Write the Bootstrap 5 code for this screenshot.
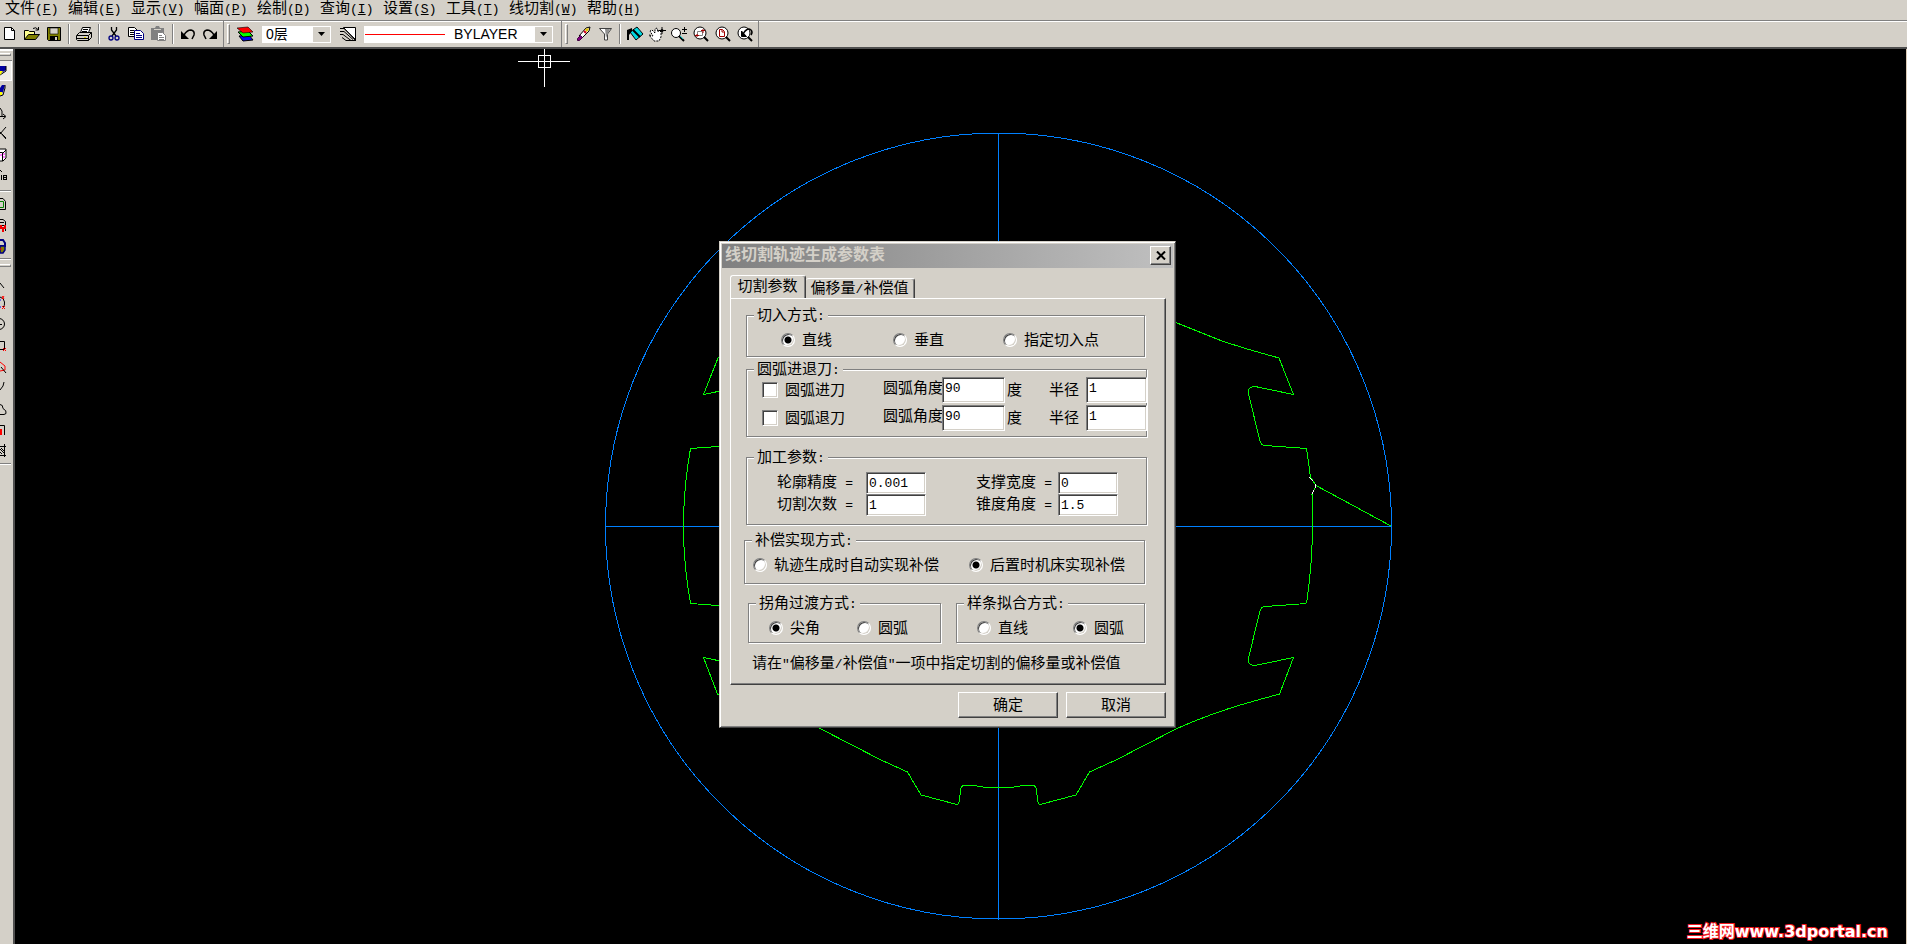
<!DOCTYPE html>
<html lang="zh-CN">
<head>
<meta charset="utf-8">
<meta name="viewport" content="width=device-width, initial-scale=1">
<title>线切割</title>
<link href="https://cdn.jsdelivr.net/npm/bootstrap@5.3.0/dist/css/bootstrap.min.css" rel="stylesheet">
<script src="https://cdn.jsdelivr.net/npm/bootstrap@5.3.0/dist/js/bootstrap.bundle.min.js"></script>
<style>
:root{--face:#d4d0c8;--shade:#808080;--deep:#404040}
body{font-family:"Liberation Sans","Noto Sans CJK SC",sans-serif;font-size:15px;line-height:18px;color:#000;background:#000;font-weight:400}
.mono{font-family:"Liberation Mono",monospace;font-size:13px;font-weight:400}
/* menu */
.menu-bar{height:20px;background:var(--face);padding-left:5px}
.menu-bar a{width:63px;height:20px;line-height:15px;color:#000;text-decoration:none;white-space:nowrap}
.menu-bar a.wide{width:78px}
/* toolbar */
.tool-bar{height:29px;background:var(--face);border-top:1px solid var(--shade);border-bottom:2px solid #505050;box-shadow:inset 0 1px #fff}
.tool-group{border-right:1px solid var(--shade);height:26px;padding-right:2px}
.tool-first{margin-left:-1px}
.tb{width:22px;height:22px;padding:0;border:0;background:none;display:flex;align-items:center;justify-content:center;flex:none}
.tb svg{display:block}
.rule{width:8px;height:20px;flex:none;display:flex;justify-content:center}
.rule::before{content:"";width:2px;background:var(--shade);border-right:1px solid #fff}
.grip{width:3px;height:20px;margin:0 4px 0 3px;border:1px solid;border-color:#fff var(--shade) var(--shade) #fff;flex:none}
.combo{height:17px;background:#fff;flex:none}
.combo select{appearance:none;border:0;background:none;padding:0;flex:1;min-width:0;height:17px;line-height:17px;font-size:14px;color:#000;outline:0}
.combo .drop{width:17px;height:15px;margin:1px;background:var(--face);pointer-events:none;display:flex;align-items:center;justify-content:center}
.combo-layer{width:69px;margin:0 6px;padding-left:4px}
.combo-line{width:189px;margin:0 6px 0 5px;padding-left:1px}
.line-sample{width:80px;height:1px;background:#f00;margin-right:9px}
/* side bar */
.side-bar{width:15px;flex:none;background:var(--face);border-right:2px solid #505050;box-shadow:inset 0 2px #fff;overflow:hidden}
.side-grip{height:3px;width:11px;margin:4px 0;border:1px solid;border-color:#fff var(--shade) var(--shade) #fff;border-left:0;flex:none}
.sb{display:block;width:12px;height:21px;padding:0;border:0;background:none;flex:none}
.sb.tall{height:22px}
.sb.active{background:#eeece8;box-shadow:inset 0 1px var(--shade),inset -1px -1px #fff}
.sb svg{display:block}
.side-rule{height:2px;width:11px;background:#fff;border-top:1px solid var(--shade);flex:none;margin-top:1px}
.side-rule.spaced{margin:4px 0 2px}
.stage{overflow:hidden;border-right:1px solid #d8c8b4}
.watermark{right:18px;bottom:2px;font:bold 16px/20px "DejaVu Sans","Noto Sans CJK SC",sans-serif;color:#fff;-webkit-text-stroke:2px #f01820;paint-order:stroke fill}
/* dialog */
.dlg{left:704px;top:192px;width:457px;background:var(--face);border:1px solid;border-color:var(--face) var(--deep) var(--deep) var(--face);box-shadow:inset 1px 1px #fff,inset -1px -1px var(--shade);padding:2px 2px 9px}
.dlg-title{height:24px;background:linear-gradient(90deg,#808080,#c0c0c0);color:var(--face);font-size:16px;font-weight:700;padding:0 2px 2px 3px}
.raised{background:var(--face);border:1px solid;border-color:#fff var(--deep) var(--deep) #fff;box-shadow:inset -1px -1px var(--shade);border-radius:0;color:#000;padding:0}
.close-x{width:21px;height:19px}
.tab-row{padding:7px 0 0 8px;height:30px}
.tab-row button{border:1px solid;border-color:#fff var(--deep) transparent #fff;border-bottom:0;border-radius:3px 3px 0 0;box-shadow:inset -1px 0 var(--shade);background:var(--face);color:#000;font-size:15px;padding:0 1px 0 0;white-space:nowrap}
.tab-row .tab-on{width:76px;height:23px;position:relative;z-index:1;padding-bottom:2px}
.tab-row .tab-off{width:109px;height:20px;border-left:0}
.tab-page{margin:0 7px 0 8px;border:1px solid;border-color:#fff var(--deep) var(--deep) #fff;box-shadow:inset -1px -1px var(--shade);padding:16px 18px 12px 15px;height:387px}
.gbox{border:1px solid var(--shade);box-shadow:1px 1px #fff,inset 1px 1px #fff;margin:0}
.gbox legend{width:auto;margin:-10px 0 -1px 7px;padding:0 3px;font-size:15px;line-height:18px;background:var(--face);height:18px}
.radio-row{height:17px;clear:left}
.pick{display:flex;align-items:center;gap:7px;white-space:nowrap}
.pick input{appearance:none;width:14px;height:14px;margin:0;background:#fff;border:1px solid;border-color:var(--shade) #fff #fff var(--shade);flex:none}
.pick input[type=radio]{border-radius:50%;box-shadow:inset 1px 1px var(--deep),inset -1px -1px var(--face)}
.pick input[type=radio]:checked{background:radial-gradient(circle,#000 3px,#fff 4px)}
.pick input[type=checkbox]{width:16px;height:16px;box-shadow:inset 1px 1px var(--deep),inset -1px -1px var(--face)}
.field{background:#fff;border:1px solid;border-color:var(--shade) #fff #fff var(--shade);box-shadow:inset 1px 1px var(--deep),inset -1px -1px var(--face);border-radius:0;padding:0 2px;color:#000;outline:0;width:100%;min-width:0}
.arc-grid{clear:left;display:grid;grid-template-columns:121px 59px 63px 44px 37px 61px;row-gap:2px;padding-left:15px;align-items:center;white-space:nowrap}
.arc-grid .field{height:26px;padding-bottom:4px}
.arc-grid .angle{padding-bottom:4px}
.arc-grid .unit{padding-left:2px}
.par-grid{clear:left;display:grid;grid-template-columns:89px 60px 50px 82px 60px;padding:7px 0 0 30px;align-items:center;white-space:nowrap}
.par-grid .field{height:22px}
.dlg .btn-push{width:100px;height:26px;font-size:15px}
</style>
</head>
<body class="d-flex flex-column vh-100 overflow-hidden">

<nav class="menu-bar d-flex flex-shrink-0" aria-label="菜单">
  <a href="#">文件<span class="mono">(<u>F</u>)</span></a>
  <a href="#">编辑<span class="mono">(<u>E</u>)</span></a>
  <a href="#">显示<span class="mono">(<u>V</u>)</span></a>
  <a href="#">幅面<span class="mono">(<u>P</u>)</span></a>
  <a href="#">绘制<span class="mono">(<u>D</u>)</span></a>
  <a href="#">查询<span class="mono">(<u>I</u>)</span></a>
  <a href="#">设置<span class="mono">(<u>S</u>)</span></a>
  <a href="#">工具<span class="mono">(<u>T</u>)</span></a>
  <a href="#" class="wide">线切割<span class="mono">(<u>W</u>)</span></a>
  <a href="#">帮助<span class="mono">(<u>H</u>)</span></a>
</nav>

<div class="tool-bar d-flex flex-shrink-0">
  <div class="tool-group tool-first d-flex align-items-center">
    <button class="tb" aria-label="新建"><svg width="16" height="16"><path d="M2.500 1.500h7l3 3v9h-10z" fill="#fff" stroke="#000"/><path d="M9.500 1.500v3h3" fill="none" stroke="#000"/></svg></button>
    <button class="tb" aria-label="打开"><svg width="16" height="16"><path d="M.5 13.500v-9h4l1 1h5v3" fill="#ffff90" stroke="#000"/><path d="M.5 13.500l4-5h11l-4 5z" fill="#808000" stroke="#000"/><path d="M9 2.500q3-2 5 1M14.500 1v3h-3" fill="none" stroke="#000"/></svg></button>
    <button class="tb" aria-label="保存"><svg width="16" height="16"><path d="M1.500 1.500h13v13h-12l-1-1z" fill="#808000" stroke="#000"/><path d="M4 2h8v6H4z" fill="#d4d0c8" stroke="#000" stroke-width=".6"/><path d="M4 10h8v5H4z"/><path d="M9 11h2v3H9z" fill="#d4d0c8"/></svg></button>
    <span class="rule"></span>
    <button class="tb" aria-label="打印"><svg width="16" height="16"><path d="M4.500 6.500l2-5h8l-2 5" fill="#fff" stroke="#000"/><path d="M7 3.500h5M6 5.500h5" stroke="#000"/><path d="M.5 9.500l3-3h12v5l-3 3h-11l-1-1z" fill="#d4d0c8" stroke="#000"/><path d="M1 9.500h11.500l3-3M12.500 9.500v5M1 12.500h11" fill="none" stroke="#000"/><path d="M8 11h2v1H8z" fill="#e0d000"/></svg></button>
    <span class="rule"></span>
    <button class="tb" aria-label="剪切"><svg width="16" height="16" fill="none"><path d="M5.500 1v3l4.500 6M10.500 1v3L6 10" stroke="#000" stroke-width="1.300"/><circle cx="5" cy="12" r="2" stroke="#000080" stroke-width="1.300"/><circle cx="11" cy="12" r="2" stroke="#000080" stroke-width="1.300"/></svg></button>
    <button class="tb" aria-label="复制"><svg width="16" height="16"><path d="M.5 1.500h6l3 3v6h-9z" fill="#fff" stroke="#000"/><path d="M2 4.500h4M2 6.500h5M2 8.500h5" stroke="#000"/><path d="M6.500 4.500h6l3 3v6h-9z" fill="#fff" stroke="#000080"/><path d="M8 7.500h4M8 9.500h6M8 11.500h6" stroke="#000080"/></svg></button>
    <button class="tb" aria-label="粘贴"><svg width="16" height="16"><path d="M1 2h4l1-2h3l1 2h4v12H1z" fill="#808080"/><path d="M4 3.500h7" stroke="#d4d0c8"/><path d="M7.500 6.500h5l3 3v5h-8z" fill="#fff" stroke="#808080"/><path d="M9 9.500h3M9 11.500h5M9 13.500h5" stroke="#808080"/></svg></button>
    <span class="rule"></span>
    <button class="tb" aria-label="撤销"><svg width="16" height="16"><path d="M1 5v8h8z"/><path d="M4 9q3-5 7-5 4 1 3 5l-2 4" fill="none" stroke="#000" stroke-width="1.500"/></svg></button>
    <button class="tb" aria-label="重做"><svg width="16" height="16"><path d="M15 5v8H7z"/><path d="M12 9Q9 4 5 4 1 5 2 9l2 4" fill="none" stroke="#000" stroke-width="1.500"/></svg></button>
  </div>
  <div class="tool-group d-flex align-items-center">
    <span class="grip"></span>
    <button class="tb" aria-label="层"><svg width="18" height="16"><path d="M3 10l10-1 4 5-10 1z" fill="#00f" stroke="#000"/><path d="M2 6l10-1 5 5-10 1z" fill="#0f0" stroke="#000"/><path d="M1 2l11-1 5 5-10 1z" fill="#f00" stroke="#000" stroke-width=".6"/></svg></button>
    <div class="combo combo-layer d-flex align-items-center">
      <select aria-label="当前层"><option>0层</option></select>
      <span class="drop"><svg width="7" height="4"><path d="M0 0h7L3.500 4z"/></svg></span>
    </div>
    <button class="tb" aria-label="线型"><svg width="18" height="16" stroke="#000" fill="none"><path d="M4.500 1.500h12v13z" fill="#fff"/><path d="M1 2.500h4L16 13M1 5.500h4l9 8M1 8.500h3l8 6M3 11.500l4 3h10"/></svg></button>
    <div class="combo combo-line d-flex align-items-center">
      <span class="line-sample"></span>
      <select aria-label="线型选择"><option>BYLAYER</option></select>
      <span class="drop"><svg width="7" height="4"><path d="M0 0h7L3.500 4z"/></svg></span>
    </div>
  </div>
  <div class="tool-group d-flex align-items-center">
    <span class="grip me-1"></span>
    <button class="tb" aria-label="删除"><svg width="16" height="16"><path d="M4 10l7-8 4-1-1 4-7 7z" fill="#fff" stroke="#000"/><path d="M10 3l4-1-1 3-2 1z" fill="#e0c000"/><path d="M9 5l2 2" stroke="#d00020" stroke-width="2"/><path d="M2.500 12.500l3-3 2 2-3 3h-2z" fill="#800080" stroke="#400040"/></svg></button>
    <button class="tb" aria-label="过滤"><svg width="16" height="16"><path d="M2.500 2.500h12L10.500 8v6h-3V8z" fill="#fff" stroke="#404040"/><path d="M8 3h5L9 12z" fill="#909090"/></svg></button>
    <span class="rule"></span>
    <button class="tb" aria-label="重画"><svg width="18" height="16"><path d="M4 6l7-5 6 7-7 6z" fill="#00d8e0" stroke="#000"/><path d="M7 4l7 7" stroke="#000" stroke-width="2"/><path d="M1 4l5-2v3L3 9v5H1z"/></svg></button>
    <button class="tb" aria-label="平移"><svg width="18" height="16"><path d="M1 9l4 1-3-5 2-1 3 3V3l2-1 1 4 1-2 2 2v5l-2 4H6z" fill="#fff"/><path d="M1 9l4 1-3-5 2-1 3 3V3l2-1 1 4 1-2 2 2v5l-2 4H6z" fill="none" stroke="#000" stroke-dasharray="2 1"/><path d="M14 1v7M11 4.500h7" stroke="#000"/><circle cx="14" cy="4.500" r="1.500"/></svg></button>
    <button class="tb" aria-label="缩放"><svg width="18" height="16" fill="none" stroke="#000"><circle cx="6" cy="7" r="4.500" fill="#fff"/><path d="M12 3.500h5M14.500 1v5M12 7.500h5"/><path d="M9 10l5 5" stroke-width="2"/><path d="M10 10l3 3" stroke="#00c0c0"/></svg></button>
    <button class="tb" aria-label="窗口"><svg width="18" height="16" fill="none" stroke="#000"><circle cx="8" cy="7" r="6" fill="#fff"/><path d="M5.500 5.500h5v4h-5z" stroke="#808080"/><path d="M9 4.500h4M11 3v4M3 9.500h4M5 8v3" stroke="#a00000"/><path d="M12 11l4 4" stroke-width="2"/></svg></button>
    <button class="tb" aria-label="全部"><svg width="18" height="16" fill="none" stroke="#000"><circle cx="8" cy="7" r="6" fill="#fff"/><path d="M5.500 3.500h3l2 2v5h-5zM8 4v2h2" stroke="#a00000"/><path d="M12 11l4 4" stroke-width="2"/></svg></button>
    <button class="tb" aria-label="回溯"><svg width="18" height="16" fill="none" stroke="#000"><circle cx="8" cy="7" r="6" fill="#fff"/><path d="M5.500 5v5.500h5z" fill="#000"/><path d="M7 8q4-7 8-4 2 2 0 5" stroke-width="1.500"/><path d="M12 11l4 4" stroke-width="2"/></svg></button>
  </div>
</div>

<main class="d-flex flex-grow-1" style="min-height:0">
  <aside class="side-bar d-flex flex-column" aria-label="工具箱">
    <div class="side-grip"></div>
    <button class="sb active" aria-label="绘图"><svg width="12" height="21"><path d="M0 6h6v4l-6 4z" fill="#0000a0"/><path d="M6 6v5l-6 4" fill="none" stroke="#000"/><path d="M0 11h3l-3 4z" fill="#ff0"/></svg></button>
    <button class="sb" aria-label="编辑"><svg width="12" height="21"><path d="M2 4h3l-2 7-3 2V7z" fill="#0000a0"/><path d="M0 11h2v3H0z" fill="#ff0"/><path d="M5 4v3l-2 7-3 1" fill="none" stroke="#000"/></svg></button>
    <button class="sb" aria-label="标注"><svg width="12" height="21" fill="none" stroke="#000"><path d="M0 6l2 3v5M0 14.500h5M3 12l3 2.500L3 17"/></svg></button>
    <button class="sb" aria-label="裁剪"><svg width="12" height="21" fill="none" stroke="#000"><path d="M6 4l-6 7M0 9l6 7M2 11l4 4"/></svg></button>
    <button class="sb" aria-label="块"><svg width="12" height="21"><path d="M-4 9l4-4h6v9l-3 3h-6z" fill="#fff" stroke="#000"/><path d="M0 8.500h2.500V17M3 9l3-3" fill="none" stroke="#000"/><path d="M0 11h2M4 9v6" stroke="#f0f" stroke-dasharray="2 1"/></svg></button>
    <button class="sb" aria-label="库"><svg width="12" height="21" fill="none" stroke="#000"><path d="M0 5l2 2M1.500 10v5M3.500 10v5M6 10.500H4M4 12.500h2M4 14.500h2M6.500 10v5"/></svg></button>
    <div class="side-rule spaced"></div>
    <button class="sb" aria-label="轨迹"><svg width="12" height="21" fill="none"><path d="M0 4.500h3l2.500 3v8H0" stroke="#000"/><path d="M0 7.500h3.500v6H0" stroke="#008000"/></svg></button>
    <button class="sb" aria-label="代码"><svg width="12" height="21"><path d="M0 4.500h3l2.500 2V16M0 7.500h4M0 10.500h4" fill="none" stroke="#000"/><path d="M0 10h2v2h2v-2h2v4H4v3H2v-3H0z" fill="#f00000"/></svg></button>
    <button class="sb" aria-label="机床"><svg width="12" height="21"><path d="M0 4h3l2 3v3H0" fill="none" stroke="#000080" stroke-width="2"/><path d="M0 10h5v4l-2 3H0z" fill="#808000" stroke="#000080" stroke-width="1.500"/><path d="M0 13h2" stroke="#f00"/></svg></button>
    <div class="side-rule"></div>
    <div class="side-grip"></div>
    <button class="sb" aria-label="直线"><svg width="12" height="21" fill="none" stroke="#000"><path d="M0 12l4 5"/></svg></button>
    <button class="sb" aria-label="圆弧"><svg width="12" height="21" fill="none"><path d="M0 5q4 1 4.500 5T3 15" stroke="#000"/><path d="M2 4l2 3m0-3l-2 3M2 14l3 3m0-3l-3 3" stroke="#f00"/><path d="M0 7v2M0 14v2" stroke="#00f"/></svg></button>
    <button class="sb tall" aria-label="圆"><svg width="12" height="22" fill="none" stroke="#000"><circle cx="-1" cy="11" r="5.500"/><path d="M0 11.500h2"/></svg></button>
    <button class="sb" aria-label="矩形"><svg width="12" height="21" fill="none"><path d="M0 6.500h4.500v8H0" stroke="#000"/><path d="M3 13l3 3m0-3l-3 3" stroke="#f00"/></svg></button>
    <button class="sb tall" aria-label="中心线"><svg width="12" height="22" fill="none"><path d="M0 6l5 4v4l-5 1" stroke="#f00"/><path d="M1 11l5 6" stroke="#000"/></svg></button>
    <button class="sb" aria-label="样条"><svg width="12" height="21" fill="none" stroke="#000"><path d="M4 4q0 4-4 8"/></svg></button>
    <button class="sb" aria-label="轮廓"><svg width="12" height="21" fill="none" stroke="#000"><path d="M0 5.500q3 0 3 4 4 2 3 5l-2 1H0"/></svg></button>
    <button class="sb" aria-label="等距"><svg width="12" height="21" fill="none"><path d="M0 5.500h4.500V15" stroke="#000"/><path d="M1 9v6" stroke="#f00" stroke-width="2"/></svg></button>
    <button class="sb" aria-label="剖面线"><svg width="12" height="21" fill="none" stroke="#000"><path d="M0 5.500h6M0 14.500h6M4.500 3v13M0 8l4 4M0 11l2 2M1 7l3 3"/></svg></button>
    <div class="side-rule"></div>
  </aside>

  <section class="stage position-relative flex-grow-1">
    <svg class="d-block w-100 h-100" viewBox="15 49 1891 895" preserveAspectRatio="xMinYMin meet" fill="none" shape-rendering="crispEdges" role="img" aria-label="图形">
      <g stroke="#0080ff">
        <circle cx="998.500" cy="526" r="393"/>
        <path d="M605 526.500h787M998.500 133v786"/>
      </g>
      <g stroke="#00ff00">
        <path id="edge" d="M1166 318L1177 323 1222 341 1247 349 1279 358 1293.500 394.500 1255 386.500Q1248 387 1248 392L1260 441Q1261 445 1265 445.500L1306.500 448.500M1306.500 603.500L1265 606.500Q1261 607 1260 611L1248 660Q1248 665 1255 665.500L1293.500 657.500 1279.500 694 1247 703Q1212 713 1177 728.500L1145 745 1116 760 1089.500 772 1076 795 1040 804.500Q1038 804 1037.500 799L1036 788Q1035 785 1031 785.500L1023 785.500 1011 787.500H998"/>
        <use href="#edge" transform="translate(1997) scale(-1 1)"/>
        <path d="M690.500 448.500Q676.500 526 690.500 603.500M1306.500 448.500L1310.500 477 1316 485.500 1312 494.500Q1314.500 550 1306.500 603.500M1316 485.500L1391 526"/>
      </g>
      <path d="M1309 477l4 4M1315.500 484v4M1314 490l-2 4" stroke="#fff"/>
      <path d="M518 61.500h52M544.500 49v38M538.500 55.500h12v12h-12z" stroke="#fff"/>
    </svg>

    <form class="dlg position-absolute" role="dialog" aria-labelledby="dlgTitle">
      <div class="dlg-title d-flex align-items-center justify-content-between">
        <span id="dlgTitle">线切割轨迹生成参数表</span>
        <button type="button" class="raised close-x d-flex align-items-center justify-content-center" aria-label="关闭"><svg width="10" height="9"><path d="M1 .5l8 8M9 .5l-8 8" stroke="#000" stroke-width="2"/></svg></button>
      </div>
      <div class="tab-row d-flex align-items-end" role="tablist">
        <button type="button" class="tab-on" role="tab" aria-selected="true">切割参数</button>
        <button type="button" class="tab-off" role="tab">偏移量<span class="mono">/</span>补偿值</button>
      </div>
      <div class="tab-page">
        <fieldset class="gbox" style="height:42px;margin-right:2px">
          <legend>切入方式<span class="mono">:</span></legend>
          <div class="radio-row d-flex align-items-center pt-3" style="padding-left:34px">
            <label class="pick" style="width:112px"><input type="radio" name="entry" checked>直线</label>
            <label class="pick" style="width:110px"><input type="radio" name="entry">垂直</label>
            <label class="pick"><input type="radio" name="entry">指定切入点</label>
          </div>
        </fieldset>

        <fieldset class="gbox" style="height:68px;margin-top:12px">
          <legend>圆弧进退刀<span class="mono">:</span></legend>
          <div class="arc-grid">
            <label class="pick"><input type="checkbox">圆弧进刀</label>
            <label class="angle" for="a1">圆弧角度</label><input id="a1" class="field mono" value="90"><span class="unit">度</span>
            <label for="r1">半径</label><input id="r1" class="field mono" value="1">
            <label class="pick"><input type="checkbox">圆弧退刀</label>
            <label class="angle" for="a2">圆弧角度</label><input id="a2" class="field mono" value="90"><span class="unit">度</span>
            <label for="r2">半径</label><input id="r2" class="field mono" value="1">
          </div>
        </fieldset>

        <fieldset class="gbox" style="height:68px;margin-top:20px">
          <legend>加工参数<span class="mono">:</span></legend>
          <div class="par-grid">
            <label for="p1">轮廓精度 <span class="mono ms-1">=</span></label><input id="p1" class="field mono" value="0.001"><span></span>
            <label for="p2">支撑宽度 <span class="mono ms-1">=</span></label><input id="p2" class="field mono" value="0">
            <label for="p3">切割次数 <span class="mono ms-1">=</span></label><input id="p3" class="field mono" value="1"><span></span>
            <label for="p4">锥度角度 <span class="mono ms-1">=</span></label><input id="p4" class="field mono" value="1.5">
          </div>
        </fieldset>

        <fieldset class="gbox" style="height:44px;margin:15px 2px 0 -2px">
          <legend>补偿实现方式<span class="mono">:</span></legend>
          <div class="radio-row d-flex align-items-center pt-3 ps-2">
            <label class="pick" style="width:216px"><input type="radio" name="comp">轨迹生成时自动实现补偿</label>
            <label class="pick"><input type="radio" name="comp" checked>后置时机床实现补偿</label>
          </div>
        </fieldset>

        <div class="d-flex justify-content-between" style="margin:19px 2px 0 2px">
          <fieldset class="gbox" style="height:40px;width:193px">
            <legend>拐角过渡方式<span class="mono">:</span></legend>
            <div class="radio-row d-flex align-items-center pt-3" style="padding-left:20px">
              <label class="pick" style="width:88px"><input type="radio" name="corner" checked>尖角</label>
              <label class="pick"><input type="radio" name="corner">圆弧</label>
            </div>
          </fieldset>
          <fieldset class="gbox" style="height:40px;width:189px">
            <legend>样条拟合方式<span class="mono">:</span></legend>
            <div class="radio-row d-flex align-items-center pt-3" style="padding-left:20px">
              <label class="pick" style="width:96px"><input type="radio" name="spline">直线</label>
              <label class="pick"><input type="radio" name="spline" checked>圆弧</label>
            </div>
          </fieldset>
        </div>
        <p class="mb-0 text-nowrap" style="margin-top:11px;padding-left:6px">请在<span class="mono">"</span>偏移量<span class="mono">/</span>补偿值<span class="mono">"</span>一项中指定切割的偏移量或补偿值</p>
      </div>
      <div class="d-flex justify-content-end gap-2" style="margin:7px 7px 0 0">
        <button type="submit" class="raised btn-push">确定</button>
        <button type="button" class="raised btn-push">取消</button>
      </div>
    </form>

    <div class="watermark position-absolute">三维网www.3dportal.cn</div>
  </section>
</main>
</body>
</html>
